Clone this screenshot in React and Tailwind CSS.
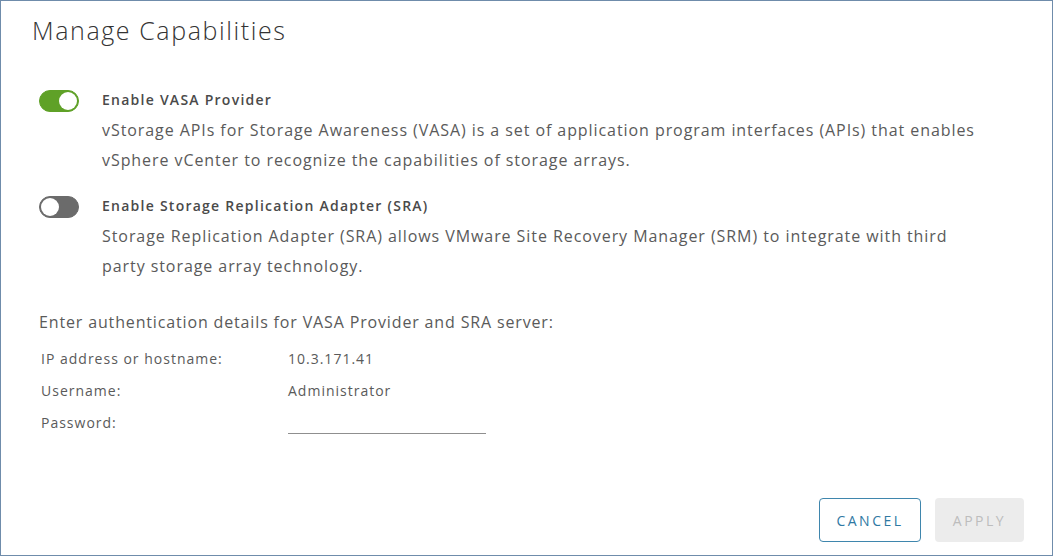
import React, { useState } from "react";

function Toggle({ on, onChange }) {
  return (
    <button
      type="button"
      onClick={onChange}
      className={`relative w-[40px] h-[22px] rounded-full shrink-0 border ${
        on ? "bg-[#5fa127] border-[#5fa127]" : "bg-[#6b6b6b] border-[#6b6b6b]"
      }`}
    >
      <span
        className={`absolute top-[1px] w-[18px] h-[18px] rounded-full bg-white ${
          on ? "right-[1px]" : "left-[1px]"
        }`}
      />
    </button>
  );
}

function Capability({ on, onChange, label, lines }) {
  return (
    <div className="flex gap-[23px]">
      <div className="pt-[1px]">
        <Toggle on={on} onChange={onChange} />
      </div>
      <div className="flex flex-col">
        <div className="text-[14px] leading-[22px] font-semibold tracking-[1.25px] text-[#4a4a4a]">{label}</div>
        <p className="mt-[4px] text-[16px] leading-[30px] tracking-[0.93px] text-[#5a5a5a]">
          {lines[0]}
          <br />
          {lines[1]}
        </p>
      </div>
    </div>
  );
}

export default function App() {
  const [vasa, setVasa] = useState(true);
  const [sra, setSra] = useState(false);

  return (
    <div
      className="w-[1053px] h-[556px] bg-white border border-[#6f8cab] flex flex-col text-[#565656]"
      style={{ fontFamily: "'Open Sans', Lato, sans-serif" }}
    >
      <h1 className="pl-[31px] pt-[13px] text-[25px] leading-[32px] font-light tracking-[1.6px] text-[#333]">
        Manage Capabilities
      </h1>

      <div className="pl-[38px] pt-[43px] flex flex-col gap-[20px]">
        <Capability
          on={vasa}
          onChange={() => setVasa(!vasa)}
          label="Enable VASA Provider"
          lines={[
            "vStorage APIs for Storage Awareness (VASA) is a set of application program interfaces (APIs) that enables",
            "vSphere vCenter to recognize the capabilities of storage arrays.",
          ]}
        />
        <Capability
          on={sra}
          onChange={() => setSra(!sra)}
          label="Enable Storage Replication Adapter (SRA)"
          lines={[
            "Storage Replication Adapter (SRA) allows VMware Site Recovery Manager (SRM) to integrate with third",
            "party storage array technology.",
          ]}
        />
      </div>

      <div className="pl-[38px] pt-[26px]">
        <div className="text-[16px] leading-[30px] tracking-[0.85px] text-[#5a5a5a]">
          Enter authentication details for VASA Provider and SRA server:
        </div>
        <div className="pl-[2px] mt-[6px] grid grid-cols-[247px_200px] text-[14px] leading-[32px] tracking-[1px] text-[#5a5a5a]">
          <div>IP address or hostname:</div>
          <div>10.3.171.41</div>
          <div>Username:</div>
          <div>Administrator</div>
          <div>Password:</div>
          <div>
            <input
              type="password"
              className="w-[198px] h-[20px] border-b border-[#8f8f8f] outline-none bg-transparent"
            />
          </div>
        </div>
      </div>

      <div className="mt-auto flex justify-end gap-[14px] pr-[28px] pb-[13px]">
        <button
          type="button"
          className="w-[102px] h-[44px] rounded-[4px] border border-[#3f86ad] text-[#2f79a3] text-[14px] tracking-[2.5px] font-medium"
        >
          CANCEL
        </button>
        <button
          type="button"
          disabled
          className="w-[89px] h-[44px] rounded-[4px] bg-[#ececec] text-[#bdbdbd] text-[14px] tracking-[2.5px] font-medium"
        >
          APPLY
        </button>
      </div>
    </div>
  );
}
